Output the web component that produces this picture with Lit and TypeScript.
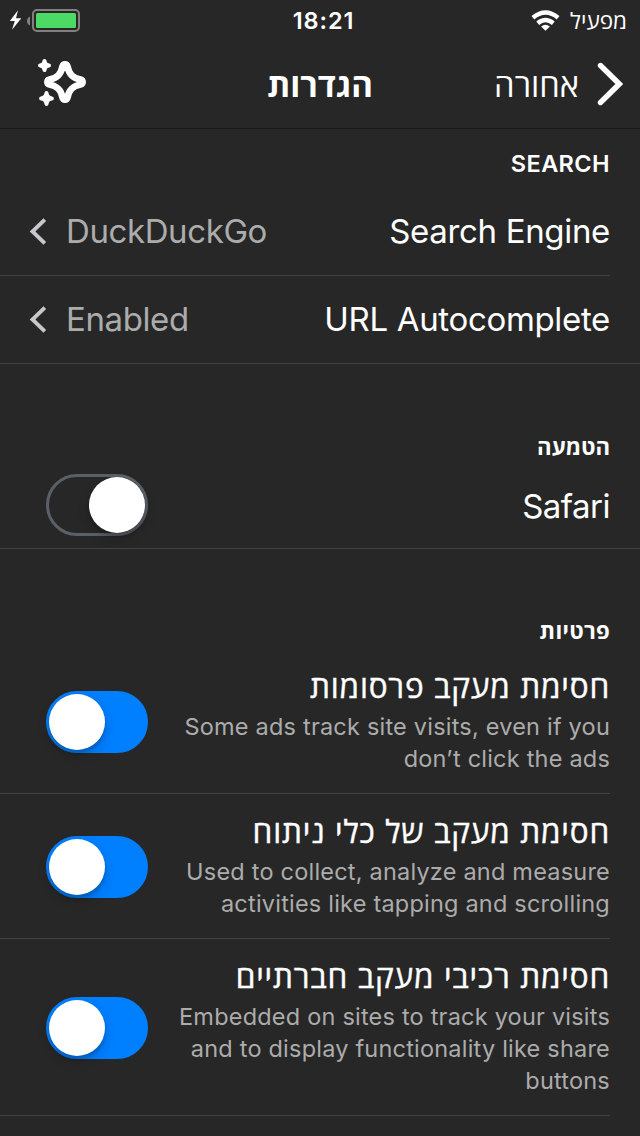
import { LitElement, html, css, nothing } from "lit";
import { customElement, property } from "lit/decorators.js";

@customElement("toggle-switch")
class ToggleSwitch extends LitElement {
  @property({ type: Boolean, reflect: true }) on = false;

  static styles = css`
    :host {
      display: flex;
      box-sizing: border-box;
      flex: none;
      width: 102px;
      height: 62px;
      border: 3px solid #5a6068;
      border-radius: 31px;
      justify-content: flex-start;
    }
    :host([on]) {
      background: #007fff;
      border-color: #007fff;
      justify-content: flex-end;
    }
    .knob {
      width: 56px;
      height: 56px;
      border-radius: 50%;
      background: #fff;
      box-shadow: 0 5px 12px rgba(0, 0, 0, 0.2), 0 4px 3px rgba(0, 0, 0, 0.12);
    }
  `;

  render() {
    return html`<div class="knob"></div>`;
  }
}

@customElement("status-bar")
class StatusBar extends LitElement {
  static styles = css`
    :host {
      display: grid;
      grid-template-columns: 1fr auto 1fr;
      align-items: center;
      height: 40px;
      padding: 0 13px 0 10px;
      direction: ltr;
      color: #fff;
    }
    .power {
      display: flex;
      align-items: center;
      padding-top: 1px;
    }
    .time {
      font-size: 23.5px;
      font-weight: 600;
      letter-spacing: 0.9px;
      padding-left: 10px;
    }
    .carrier {
      display: flex;
      align-items: center;
      justify-content: flex-end;
      gap: 10px;
      font-size: 22.5px;
    }
    svg {
      display: block;
    }
  `;

  render() {
    return html`
      <div class="power">
        <svg width="70" height="24" viewBox="10 9 70 24">
          <path d="M18 10.3L9.8 21H14.8L12 29.7L21.3 18.3H16Z" fill="#fff" />
          <path d="M30 16.5V25.5Q27 24 27 21Q27 18 30 16.5Z" fill="#808080" />
          <rect x="33" y="10" width="46" height="21" rx="4" fill="none" stroke="#808080" stroke-width="2" />
          <rect x="36" y="13" width="40" height="15" rx="1.5" fill="#4cd964" />
        </svg>
      </div>
      <div class="time">18:21</div>
      <div class="carrier">
        <svg width="29" height="21" viewBox="530.5 9.5 29 21">
          <g fill="none" stroke="#fff" stroke-width="4.4">
            <path d="M532.4 17.2Q545 7 557.6 17.2" />
            <path d="M537.2 22.8Q545 16.4 552.8 22.8" />
          </g>
          <path d="M540.6 26Q545 22.4 549.4 26L545 30.2Z" fill="#fff" />
        </svg>
        <span>מפעיל</span>
      </div>
    `;
  }
}

@customElement("nav-header")
class NavHeader extends LitElement {
  static styles = css`
    :host {
      display: grid;
      grid-template-columns: 1fr auto 1fr;
      align-items: center;
      height: 88px;
      padding: 0 17px 0 37px;
      border-bottom: 1px solid #191919;
      color: #fff;
    }
    .back {
      display: flex;
      align-items: center;
      gap: 18px;
      font-size: 32.7px;
    }
    .title {
      font-size: 33px;
      font-weight: 700;
      padding-right: 20px;
    }
    .action {
      display: flex;
      justify-content: flex-end;
      padding-bottom: 2px;
    }
    svg {
      display: block;
    }
  `;

  render() {
    return html`
      <div class="back">
        <svg width="26" height="44" viewBox="597 62 26 44">
          <path d="M600.5 65.5L619.3 84L600.5 102.5" fill="none" stroke="#fff" stroke-width="5.4" stroke-linecap="round" stroke-linejoin="miter" />
        </svg>
        <span>אחורה</span>
      </div>
      <div class="title">הגדרות</div>
      <div class="action">
        <svg width="50" height="48" viewBox="37 59 50 48">
          <path
            d="M62.5 66.5Q63 64.4 65 64.4Q67 64.4 67.5 66.5C69 74.3 72.7 78 80.5 79.5Q82.6 80 82.6 82Q82.6 84 80.5 84.5C72.7 86 69 89.7 67.5 97.5Q67 99.6 65 99.6Q63 99.6 62.5 97.5C61 89.7 57.3 86 49.5 84.5Q47.4 84 47.4 82Q47.4 80 49.5 79.5C57.3 78 61 74.3 62.5 66.5Z"
            fill="none" stroke="#fff" stroke-width="6.7" stroke-linejoin="round" />
          <g fill="#fff" stroke="#fff" stroke-width="4" stroke-linejoin="round">
            <path d="M44.5 61Q44.8 65.2 49 65.5Q44.8 65.8 44.5 70Q44.2 65.8 40 65.5Q44.2 65.2 44.5 61Z" />
            <path d="M46.5 93Q47 98 51.9 98.5Q47 99 46.5 104Q46 99 41.1 98.5Q46 98 46.5 93Z" />
          </g>
        </svg>
      </div>
    `;
  }
}

interface Item {
  label: string;
  value?: string;
  detail?: string;
  on?: boolean;
}

interface Section {
  title: string;
  kind: string;
  items: Item[];
}

const sections: Section[] = [
  {
    title: "SEARCH",
    kind: "search",
    items: [
      { label: "Search Engine", value: "DuckDuckGo" },
      { label: "URL Autocomplete", value: "Enabled" },
    ],
  },
  { title: "הטמעה", kind: "integration", items: [{ label: "Safari", on: false }] },
  {
    title: "פרטיות",
    kind: "privacy",
    items: [
      { label: "חסימת מעקב פרסומות", detail: "Some ads track site visits, even if you don’t click the ads", on: true },
      { label: "חסימת מעקב של כלי ניתוח", detail: "Used to collect, analyze and measure activities like tapping and scrolling", on: true },
      { label: "חסימת רכיבי מעקב חברתיים", detail: "Embedded on sites to track your visits and to display functionality like share buttons", on: true },
    ],
  },
];

@customElement("app-root")
class AppRoot extends LitElement {
  static styles = css`
    :host {
      display: block;
      height: 1136px;
      overflow: hidden;
      direction: rtl;
      background: #272727;
      color: #fff;
      font-family: "Inter", "Open Sans", sans-serif;
    }
    .heading {
      box-sizing: border-box;
      display: flex;
      align-items: center;
      padding: 0 30px;
      font-size: 22.2px;
      font-weight: 700;
    }
    .search .heading {
      height: 59px;
      padding-top: 10px;
      font-weight: 600;
      font-size: 23.5px;
      letter-spacing: 0.4px;
    }
    .integration .heading {
      height: 97px;
      padding-top: 67px;
    }
    .privacy .heading {
      height: 100px;
      padding-top: 62px;
      letter-spacing: 0.3px;
    }
    .row {
      box-sizing: border-box;
      display: flex;
      justify-content: space-between;
      align-items: center;
      height: 88px;
      margin-right: 30px;
      border-bottom: 1px solid #424244;
    }
    .row.last {
      margin-right: 0;
      padding-right: 30px;
    }
    .row.detailed {
      height: auto;
      padding: 18px 0;
    }
    .row toggle-switch {
      margin-left: 46px;
    }
    .detailed toggle-switch {
      margin-top: 1px;
    }
    .label {
      font-size: 33px;
      line-height: 40px;
      letter-spacing: -0.33px;
      white-space: nowrap;
    }
    .search .label,
    .search .value span {
      padding-bottom: 2px;
    }
    .integration .label {
      padding-top: 2px;
      letter-spacing: -0.5px;
    }
    .detailed .label {
      margin-bottom: 4px;
      font-size: 31.5px;
      letter-spacing: 0.8px;
      -webkit-text-stroke: 0.4px #fff;
    }
    .detail {
      width: 436px;
      font-size: 23.5px;
      line-height: 32px;
      letter-spacing: 0.21px;
      color: #acacac;
    }
    .value {
      display: flex;
      align-items: center;
      gap: 20px;
      padding-left: 29px;
      font-size: 33px;
      line-height: 40px;
      letter-spacing: -0.4px;
      color: #acacac;
    }
    .value svg {
      display: block;
      margin-right: -1px;
    }
  `;

  private renderRow(item: Item, last: boolean) {
    return html`
      <div class="row ${item.detail ? "detailed" : last ? "last" : ""}">
        <div>
          <div class="label">${item.label}</div>
          ${item.detail ? html`<div class="detail">${item.detail}</div>` : nothing}
        </div>
        ${item.value
          ? html`<div class="value">
              <span>${item.value}</span>
              <svg width="18" height="28" viewBox="29 217 18 28">
                <path d="M44.8 218.7L32.5 230.5L44.8 242.3" fill="none" stroke="#c7c7cc" stroke-width="3.9" />
              </svg>
            </div>`
          : html`<toggle-switch ?on=${item.on}></toggle-switch>`}
      </div>
    `;
  }

  render() {
    return html`
      <status-bar></status-bar>
      <nav-header></nav-header>
      ${sections.map(
        (s) => html`
          <section class=${s.kind}>
            <div class="heading">${s.title}</div>
            ${s.items.map((item, i) => this.renderRow(item, i === s.items.length - 1))}
          </section>
        `
      )}
    `;
  }
}
